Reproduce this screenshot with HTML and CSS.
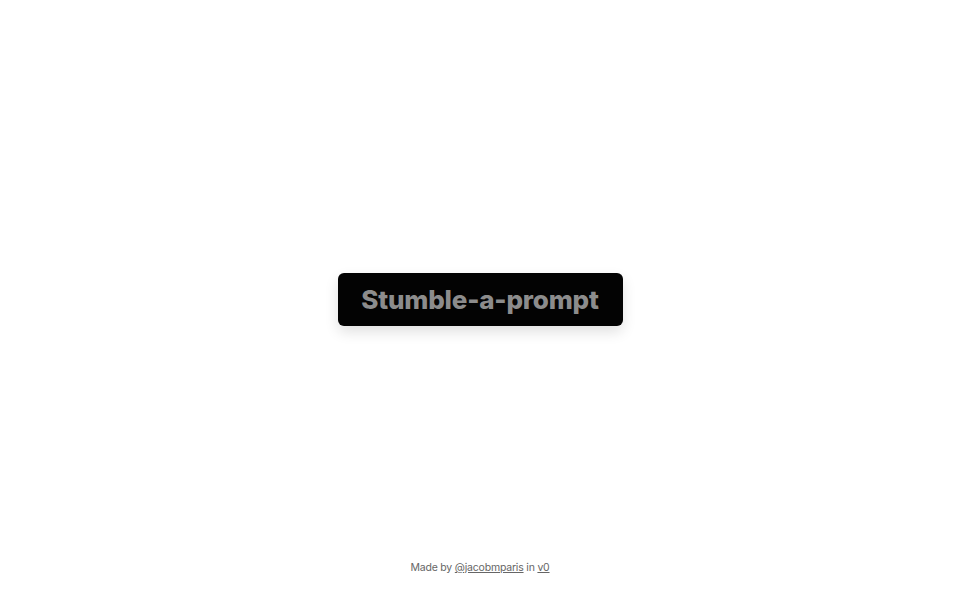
FILE: index.html
```html
<!DOCTYPE html>
<html>
<head>
<meta charset="utf-8">
<link rel="stylesheet" href="styles.css">
</head>
<body>
<div class="page">
  <div class="spacer"></div>
  <main class="center">
    <button class="stumble">Stumble-a-prompt</button>
  </main>
  <footer class="footer">
    <p>Made by <a href="#">@jacobmparis</a> in <a href="#">v0</a></p>
  </footer>
</div>
</body>
</html>
```

FILE: styles.css
```css
html, body {
  margin: 0;
  padding: 0;
  background: #ffffff;
}
.page {
  height: 100vh;
  display: grid;
  grid-template-rows: 1fr auto 1fr;
  font-family: Inter, "Liberation Sans", sans-serif;
}
.center {
  display: flex;
  justify-content: center;
  margin-bottom: 2px;
}
.stumble {
  width: 285px;
  height: 53px;
  background: #030303;
  color: #8c8c8c;
  border: none;
  border-radius: 6px;
  font-family: Inter, "Liberation Sans", sans-serif;
  font-weight: 800;
  font-size: 26px;
  letter-spacing: -0.2px;
  box-shadow: 0 6px 14px rgba(0,0,0,0.12);
  cursor: pointer;
}
.footer {
  display: flex;
  align-items: flex-end;
  justify-content: center;
  padding-bottom: 25px;
}
.footer p {
  margin: 0;
  font-size: 10.5px;
  letter-spacing: -0.2px;
  line-height: 14px;
  color: #666666;
}
.footer a {
  color: #666666;
  text-decoration: underline;
}
```
